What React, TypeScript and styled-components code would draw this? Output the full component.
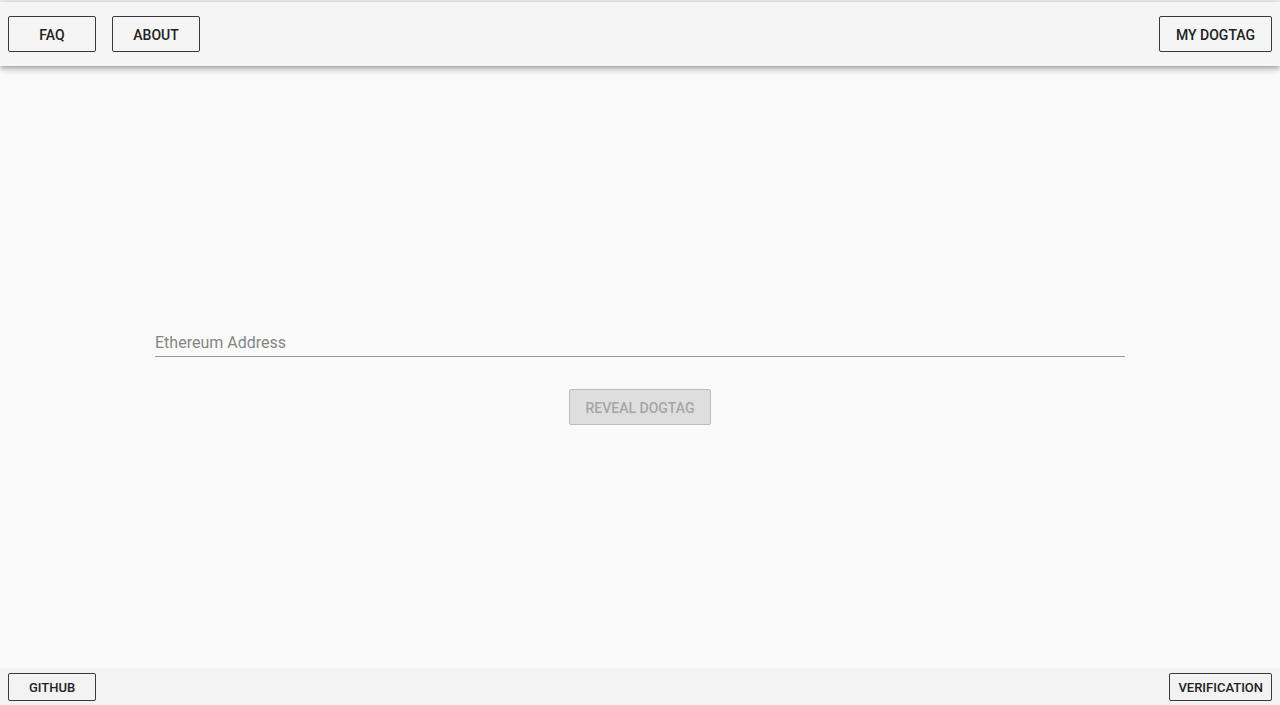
import React, { useState } from 'react';
import styled, { createGlobalStyle } from 'styled-components';

const GlobalStyle = createGlobalStyle`
  html, body {
    margin: 0;
    padding: 0;
    height: 100%;
    background: #fafafa;
    font-family: Roboto, "Liberation Sans", Arial, sans-serif;
  }
  #root {
    height: 100%;
  }
`;

const Page = styled.div`
  display: flex;
  flex-direction: column;
  height: 100vh;
  box-sizing: border-box;
  border-top: 2px solid #ececec;
`;

const Header = styled.header`
  display: flex;
  align-items: center;
  gap: 16px;
  height: 64px;
  padding: 0 8px;
  background: #f5f5f5;
  box-shadow: 0 2px 4px -1px rgba(0, 0, 0, 0.2), 0 4px 5px 0 rgba(0, 0, 0, 0.14),
    0 1px 10px 0 rgba(0, 0, 0, 0.12);
  position: relative;
  z-index: 2;
`;

const Spacer = styled.div`
  flex: 1;
`;

const OutlineButton = styled.button<{ $small?: boolean }>`
  box-sizing: border-box;
  min-width: 88px;
  height: ${(p) => (p.$small ? '28px' : '36px')};
  padding: ${(p) => (p.$small ? '1px 8px 0' : '2px 16px 0')};
  border: 1px solid #3a3a3a;
  border-radius: 2px;
  background: transparent;
  color: #212121;
  font-family: Roboto, "Liberation Sans", Arial, sans-serif;
  font-size: ${(p) => (p.$small ? '13px' : '14px')};
  font-weight: 500;
  letter-spacing: 0;
  text-transform: uppercase;
  cursor: pointer;
`;

const Main = styled.main`
  flex: 1;
  display: flex;
  flex-direction: column;
  align-items: center;
  justify-content: center;
  padding-top: 14px;
`;

const Form = styled.div`
  width: 970px;
  display: flex;
  flex-direction: column;
  align-items: center;
  gap: 32px;
`;

const Field = styled.label`
  width: 100%;
  display: block;
  border-bottom: 1px solid #949494;
`;

const Input = styled.input`
  box-sizing: border-box;
  width: 100%;
  height: 32px;
  padding: 9px 0 3px;
  border: none;
  outline: none;
  background: transparent;
  font-family: Roboto, "Liberation Sans", Arial, sans-serif;
  font-size: 16px;
  color: #212121;

  &::placeholder {
    color: #858585;
    opacity: 1;
  }
`;

const RevealButton = styled.button`
  box-sizing: border-box;
  height: 36px;
  padding: 2px 16px 0;
  border: 1px solid #bcbcbc;
  border-radius: 2px;
  background: #dedede;
  color: #a6a6a6;
  font-family: Roboto, "Liberation Sans", Arial, sans-serif;
  font-size: 14px;
  font-weight: 500;
  text-transform: uppercase;
`;

const Footer = styled.footer`
  display: flex;
  align-items: center;
  height: 37px;
  padding: 0 8px;
  background: #f3f3f3;
`;

const App = () => {
  const [address, setAddress] = useState('');

  return (
    <>
      <GlobalStyle />
      <Page>
        <Header>
          <OutlineButton>FAQ</OutlineButton>
          <OutlineButton>About</OutlineButton>
          <Spacer />
          <OutlineButton>My Dogtag</OutlineButton>
        </Header>
        <Main>
          <Form>
            <Field>
              <Input
                placeholder="Ethereum Address"
                value={address}
                onChange={(e) => setAddress(e.target.value)}
              />
            </Field>
            <RevealButton disabled={!address}>Reveal Dogtag</RevealButton>
          </Form>
        </Main>
        <Footer>
          <OutlineButton $small>Github</OutlineButton>
          <Spacer />
          <OutlineButton $small>Verification</OutlineButton>
        </Footer>
      </Page>
    </>
  );
};

export default App;
